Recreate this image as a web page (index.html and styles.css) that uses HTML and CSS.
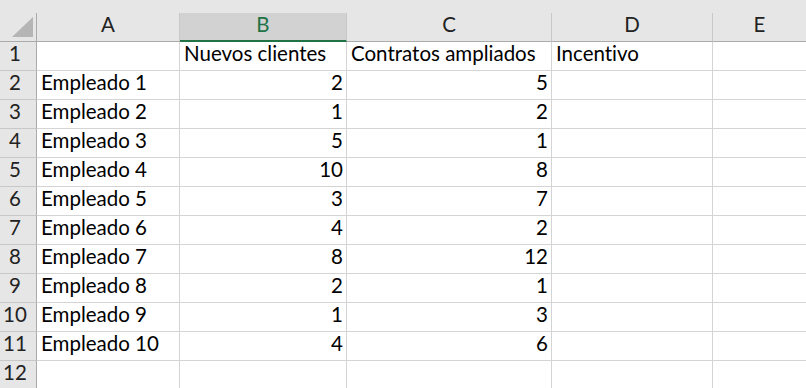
FILE: index.html
```html
<!DOCTYPE html>
<html lang="es">
<head>
<meta charset="utf-8">
<link rel="stylesheet" href="styles.css">
</head>
<body>
<div class="sheet">
  <div class="strip"></div>
  <div class="grid">
    <div class="hd corner"><svg class="tri" width="22" height="21" viewBox="0 0 22 21"><polygon points="21,0 21,20 0,20" fill="#b5b5b5"/></svg></div>
    <div class="hd col">A</div>
    <div class="hd col sel">B</div>
    <div class="hd col">C</div>
    <div class="hd col">D</div>
    <div class="hd col last">E</div>

    <div class="rh">1</div><div class="c"></div><div class="c">Nuevos clientes</div><div class="c">Contratos ampliados</div><div class="c">Incentivo</div><div class="c last"></div>
    <div class="rh">2</div><div class="c">Empleado 1</div><div class="c n">2</div><div class="c n">5</div><div class="c"></div><div class="c last"></div>
    <div class="rh">3</div><div class="c">Empleado 2</div><div class="c n">1</div><div class="c n">2</div><div class="c"></div><div class="c last"></div>
    <div class="rh">4</div><div class="c">Empleado 3</div><div class="c n">5</div><div class="c n">1</div><div class="c"></div><div class="c last"></div>
    <div class="rh">5</div><div class="c">Empleado 4</div><div class="c n">10</div><div class="c n">8</div><div class="c"></div><div class="c last"></div>
    <div class="rh">6</div><div class="c">Empleado 5</div><div class="c n">3</div><div class="c n">7</div><div class="c"></div><div class="c last"></div>
    <div class="rh">7</div><div class="c">Empleado 6</div><div class="c n">4</div><div class="c n">2</div><div class="c"></div><div class="c last"></div>
    <div class="rh">8</div><div class="c">Empleado 7</div><div class="c n">8</div><div class="c n">12</div><div class="c"></div><div class="c last"></div>
    <div class="rh">9</div><div class="c">Empleado 8</div><div class="c n">2</div><div class="c n">1</div><div class="c"></div><div class="c last"></div>
    <div class="rh">10</div><div class="c">Empleado 9</div><div class="c n">1</div><div class="c n">3</div><div class="c"></div><div class="c last"></div>
    <div class="rh">11</div><div class="c">Empleado 10</div><div class="c n">4</div><div class="c n">6</div><div class="c"></div><div class="c last"></div>
    <div class="rh">12</div><div class="c"></div><div class="c"></div><div class="c"></div><div class="c"></div><div class="c last"></div>
  </div>
</div>
</body>
</html>
```
FILE: styles.css
```css
html, body {
  margin: 0;
  padding: 0;
  background: #ffffff;
  overflow: hidden;
}
.sheet {
  width: 806px;
  height: 388px;
  overflow: hidden;
  font-family: "Lato", "Liberation Sans", sans-serif;
  font-size: 20.5px;
  font-variant-ligatures: none;
  font-feature-settings: "liga" 0, "clig" 0;
  color: #000;
}
.strip {
  height: 13px;
  background: #e6e6e6;
}
.grid {
  display: grid;
  grid-template-columns: 37px 143px 167px 205px 161px 1fr;
  grid-auto-rows: 29px;
}
.hd {
  background: #e6e6e6;
  border-bottom: 1px solid #ababab;
  border-right: 1px solid #c8c8c8;
  display: flex;
  align-items: flex-end;
  justify-content: center;
  padding-bottom: 5px;
  box-sizing: border-box;
  color: #222;
}
.hd.last { border-right: none; }
.corner {
  border-right: 1px solid #ababab;
  position: relative;
  padding: 0;
}
.tri {
  position: absolute;
  left: 12px;
  top: 4px;
}
.hd.sel {
  background: #d2d2d2;
  color: #217346;
  border-bottom: 2px solid #217346;
  padding-bottom: 4px;
}
.rh {
  background: #e6e6e6;
  border-right: 1px solid #ababab;
  border-bottom: 1px solid #c8c8c8;
  box-sizing: border-box;
  display: flex;
  align-items: flex-end;
  justify-content: center;
  padding: 0 6px 5px 0;
  color: #222;
}
.c {
  border-right: 1px solid #d4d4d4;
  border-bottom: 1px solid #d4d4d4;
  box-sizing: border-box;
  display: flex;
  align-items: flex-end;
  padding: 0 3px 5px 4px;
  white-space: nowrap;
  overflow: visible;
}
.c.last { border-right: none; }
.c.n { justify-content: flex-end; }
```
